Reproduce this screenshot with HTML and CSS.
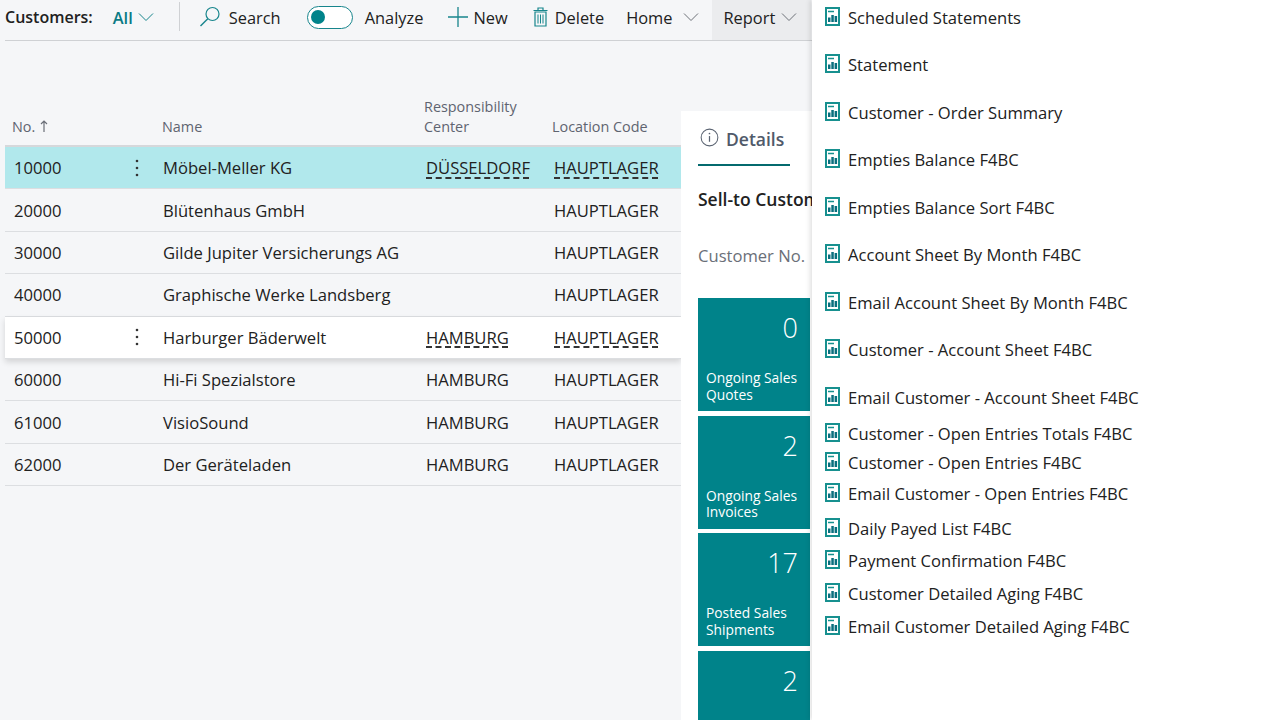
FILE: index.html
```html
<!DOCTYPE html>
<html lang="en">
<head>
<meta charset="utf-8">
<title>Customers</title>
<link rel="stylesheet" href="styles.css">
</head>
<body>
<svg class="defs" width="0" height="0" aria-hidden="true">
  <symbol id="report" viewBox="0 0 15 19">
    <rect x="1" y="1" width="13" height="17" fill="#fff" stroke="#17908f" stroke-width="2"/>
    <path d="M3 4.500h6" stroke="#17908f" stroke-width="1.500"/>
    <path d="M3 15V10.500h2.500V15zM6.300 15V8h2.500v7zM9.600 15v-6h2.500v6z" fill="#0a6f7e"/>
  </symbol>
  <symbol id="chev" viewBox="0 0 16 10">
    <path d="M1 1.500l7 7 7-7" fill="none" stroke="currentColor" stroke-width="1"/>
  </symbol>
  <symbol id="dots" viewBox="0 0 4 18">
    <circle cx="2" cy="2" r="1.300"/><circle cx="2" cy="9" r="1.300"/><circle cx="2" cy="16" r="1.300"/>
  </symbol>
</svg>

<header class="toolbar">
  <span class="page-title">Customers:</span>
  <button class="tb filter">All <svg class="chev teal"><use href="#chev"/></svg></button>
  <span class="sep"></span>
  <button class="tb search">
    <svg class="ic" viewBox="0 0 22 22"><circle cx="13.500" cy="8" r="6.500" fill="none" stroke="#17858c" stroke-width="1.200"/><path d="M8.800 12.700L1.500 20" stroke="#17858c" stroke-width="1.400"/></svg>
    Search
  </button>
  <button class="tb analyze"><span class="toggle"><span class="knob"></span></span>Analyze</button>
  <button class="tb new">
    <svg class="ic" viewBox="0 0 20 20"><path d="M10 0v20M0 10h20" stroke="#17858c" stroke-width="1.300"/></svg>
    New
  </button>
  <button class="tb delete">
    <svg class="ic trash" viewBox="0 0 15 20"><path d="M2 5h11v14H2zM0.500 3.500h14M5 3.500V1h5v2.500" fill="none" stroke="#17858c" stroke-width="1.200"/><path d="M5 7.500v9M7.500 7.500v9M10 7.500v9" stroke="#17858c" stroke-width="1"/></svg>
    Delete
  </button>
  <button class="tb home">Home <svg class="chev"><use href="#chev"/></svg></button>
  <button class="tb report">Report <svg class="chev"><use href="#chev"/></svg></button>
</header>

<main class="content">
  <section class="list">
    <div class="row head">
      <div class="c no">No. <svg class="arrow" viewBox="0 0 8 12"><path d="M4 12V1M1 4l3-3 3 3" fill="none" stroke="#6b6f78" stroke-width="1.200"/></svg></div>
      <div class="c menu"></div>
      <div class="c name">Name</div>
      <div class="c resp">Responsibility<br>Center</div>
      <div class="c loc">Location Code</div>
    </div>
    <div class="row selected">
      <div class="c no">10000</div>
      <div class="c menu"><svg class="dots"><use href="#dots"/></svg></div>
      <div class="c name">Möbel-Meller KG</div>
      <div class="c resp"><span class="dash">DÜSSELDORF</span></div>
      <div class="c loc"><span class="dash">HAUPTLAGER</span></div>
    </div>
    <div class="row">
      <div class="c no">20000</div><div class="c menu"></div>
      <div class="c name">Blütenhaus GmbH</div><div class="c resp"></div>
      <div class="c loc">HAUPTLAGER</div>
    </div>
    <div class="row">
      <div class="c no">30000</div><div class="c menu"></div>
      <div class="c name">Gilde Jupiter Versicherungs AG</div><div class="c resp"></div>
      <div class="c loc">HAUPTLAGER</div>
    </div>
    <div class="row">
      <div class="c no">40000</div><div class="c menu"></div>
      <div class="c name">Graphische Werke Landsberg</div><div class="c resp"></div>
      <div class="c loc">HAUPTLAGER</div>
    </div>
    <div class="row hover">
      <div class="c no">50000</div>
      <div class="c menu"><svg class="dots"><use href="#dots"/></svg></div>
      <div class="c name">Harburger Bäderwelt</div>
      <div class="c resp"><span class="dash">HAMBURG</span></div>
      <div class="c loc"><span class="dash">HAUPTLAGER</span></div>
    </div>
    <div class="row">
      <div class="c no">60000</div><div class="c menu"></div>
      <div class="c name">Hi-Fi Spezialstore</div>
      <div class="c resp">HAMBURG</div><div class="c loc">HAUPTLAGER</div>
    </div>
    <div class="row">
      <div class="c no">61000</div><div class="c menu"></div>
      <div class="c name">VisioSound</div>
      <div class="c resp">HAMBURG</div><div class="c loc">HAUPTLAGER</div>
    </div>
    <div class="row">
      <div class="c no">62000</div><div class="c menu"></div>
      <div class="c name">Der Geräteladen</div>
      <div class="c resp">HAMBURG</div><div class="c loc">HAUPTLAGER</div>
    </div>
  </section>

  <aside class="details">
    <div class="tab">
      <svg class="info" viewBox="0 0 20 20"><circle cx="10" cy="10" r="8.800" fill="none" stroke="#5b6472" stroke-width="1.100"/><path d="M10 8.500v6" stroke="#5b6472" stroke-width="1.300"/><circle cx="10" cy="5.800" r="0.900" fill="#5b6472"/></svg>
      Details
    </div>
    <h2 class="sect">Sell-to Customer</h2>
    <div class="field">Customer No.</div>
    <div class="tile"><span class="num">0</span><span class="cap">Ongoing Sales<br>Quotes</span></div>
    <div class="tile"><span class="num">2</span><span class="cap">Ongoing Sales<br>Invoices</span></div>
    <div class="tile"><span class="num">17</span><span class="cap">Posted Sales<br>Shipments</span></div>
    <div class="tile"><span class="num">2</span></div>
  </aside>
</main>

<nav class="dropdown">
  <a class="item h47"><svg class="rep"><use href="#report"/></svg>Scheduled Statements</a>
  <a class="item h48"><svg class="rep"><use href="#report"/></svg>Statement</a>
  <a class="item h47"><svg class="rep"><use href="#report"/></svg>Customer - Order Summary</a>
  <a class="item h48"><svg class="rep"><use href="#report"/></svg>Empties Balance F4BC</a>
  <a class="item h47"><svg class="rep"><use href="#report"/></svg>Empties Balance Sort F4BC</a>
  <a class="item h48"><svg class="rep"><use href="#report"/></svg>Account Sheet By Month F4BC</a>
  <a class="item h47"><svg class="rep"><use href="#report"/></svg>Email Account Sheet By Month F4BC</a>
  <a class="item h48"><svg class="rep"><use href="#report"/></svg>Customer - Account Sheet F4BC</a>
  <a class="item h36"><svg class="rep"><use href="#report"/></svg>Email Customer - Account Sheet F4BC</a>
  <a class="item h29"><svg class="rep"><use href="#report"/></svg>Customer - Open Entries Totals F4BC</a>
  <a class="item h31"><svg class="rep"><use href="#report"/></svg>Customer - Open Entries F4BC</a>
  <a class="item h35"><svg class="rep"><use href="#report"/></svg>Email Customer - Open Entries F4BC</a>
  <a class="item h32"><svg class="rep"><use href="#report"/></svg>Daily Payed List F4BC</a>
  <a class="item h33"><svg class="rep"><use href="#report"/></svg>Payment Confirmation F4BC</a>
  <a class="item h33"><svg class="rep"><use href="#report"/></svg>Customer Detailed Aging F4BC</a>
  <a class="item h33"><svg class="rep"><use href="#report"/></svg>Email Customer Detailed Aging F4BC</a>
</nav>
</body>
</html>
```

FILE: styles.css
```css
* { box-sizing: border-box; }
html, body { margin: 0; height: 100%; }
body {
  width: 1280px; height: 720px; overflow: hidden; position: relative;
  background: #f5f6f8; color: #212121;
  font-family: "Open Sans", "Noto Sans", sans-serif; font-size: 16.600px;
}
.defs { position: absolute; }
button { font: inherit; color: inherit; background: none; border: 0; padding: 0; }

.toolbar {
  display: flex; align-items: stretch; height: 41px; margin-left: 5px;
  border-bottom: 1px solid #cfd1d4; font-size: 16.400px;
}
.page-title { font-weight: 600; font-size: 16px; margin-right: 20px; align-self: center; padding-bottom: 6px; }
.tb { display: flex; align-items: center; white-space: nowrap; padding-bottom: 6px; }
.filter { color: #0a7b85; font-weight: 600; gap: 5px; }
.chev { width: 16px; height: 10px; color: #6d7178; margin-left: 11px; }
.chev.teal { color: #17858c; margin-left: 0; }
.sep { width: 1px; height: 29px; background: #cfd1d4; margin: 2px 19px 0 25px; }
.search { gap: 8px; margin-right: 26px; }
.ic { width: 22px; height: 22px; }
.toggle { width: 46px; height: 23px; border: 1.500px solid #17858c; border-radius: 12px; background: #fff; margin-right: 12px; display: flex; align-items: center; padding-left: 3px; }
.knob { width: 14px; height: 14px; background: #00838a; border-radius: 50%; }
.analyze { margin-right: 25px; }
.new .ic { width: 20px; height: 20px; }
.new { gap: 5px; margin-right: 25px; }
.trash { width: 15px; height: 20px; }
.delete { gap: 7px; margin-right: 22px; }
.home { margin-right: 13px; }
.report { background: #ebecee; padding-left: 11px; padding-right: 0; flex: none; width: 99px; }
.report .chev { margin-left: 6px; }

.content { display: flex; }
.list { width: 676px; flex: none; margin-left: 5px; }
.row { display: flex; height: 42.400px; align-items: center; border-bottom: 1px solid #dcdee1; }
.row.head {
  height: 106px; align-items: flex-end; color: #5f6470; font-size: 14.400px; line-height: 20px;
  border-bottom: 2px solid #d6d8db; padding-bottom: 8px;
}
.c { flex: none; padding-left: 9px; white-space: nowrap; overflow: hidden; }
.c.no { width: 102px; }
.c.menu { width: 50px; padding-left: 9px; display: flex; justify-content: center; }
.c.name { width: 260px; padding-left: 6px; }
.c.resp { width: 128px; padding-bottom: 2px; padding-top: 2px; }
.c.loc { width: 136px; padding-bottom: 2px; padding-top: 2px; }
.row.head .c { padding-left: 7px; padding-bottom: 0; padding-top: 0; }
.row.head .c.name { padding-left: 5px; }
.selected { background: #b1e8ec; }
.hover { background: #fff; box-shadow: 0 3px 6px rgba(0,0,0,.14); position: relative; }
.dots { width: 4px; height: 18px; fill: #333; }
.arrow { width: 8px; height: 12px; margin-left: 1px; }
.dash { text-decoration: underline dashed #333; text-underline-offset: 3px; text-decoration-thickness: 2px; }

.details {
  width: 599px; height: 609px; margin-top: 70px; background: #fff; padding-left: 17px; overflow: hidden; flex: none; position: relative;
}
.tab {
  display: flex; align-items: center; gap: 7px; width: 92px; height: 55px; padding: 2px 0 0 2px;
  border-bottom: 2px solid #046a6e; color: #505a6a; font-weight: 600; font-size: 17.500px;
}
.info { width: 19px; height: 19px; margin-top: -2px; }
.sect { margin: 20px 0 0; font-size: 17.500px; font-weight: 600; line-height: 26px; white-space: nowrap; }
.field { margin-top: 32px; color: #6a6f78; line-height: 24px; }
.tile {
  width: 112px; height: 113px; margin-bottom: 4.500px; background: #00838a; color: #fff;
  display: flex; flex-direction: column; padding: 12px 12px 8px 8px;
}
.field + .tile { margin-top: 30px; }
.num { font-size: 27px; line-height: 36px; text-align: right; font-weight: 300; }
.cap { margin-top: auto; font-size: 13.800px; line-height: 16.300px; white-space: nowrap; }

.dropdown {
  position: absolute; top: 0; left: 812px; right: 0; bottom: 0; background: #fff;
  box-shadow: -2px 0 5px rgba(0,0,0,.12); padding: 0.500px 0 0 13px;
}
.item { display: flex; align-items: flex-start; white-space: nowrap; color: #212121; line-height: 24px; padding-top: 5px; }
.rep { width: 15px; height: 19px; flex: none; margin-right: 8px; margin-top: 1px; }
.h47, .h48 { height: 47.500px; }
.h36 { height: 36px; } .h29 { height: 29px; } .h31 { height: 31px; } .h35 { height: 35px; }
.h32 { height: 32px; } .h33 { height: 33px; }
```
